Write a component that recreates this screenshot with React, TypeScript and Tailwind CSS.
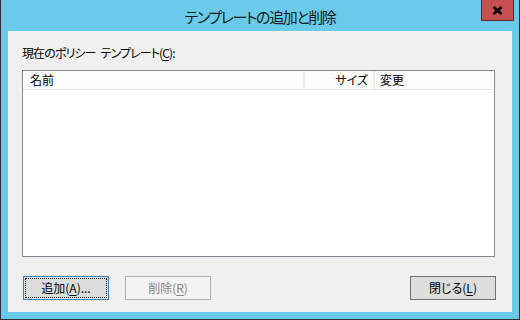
import React from "react";

const font = "font-['Meiryo_UI','Noto_Sans_CJK_JP','Noto_Sans',sans-serif] [font-feature-settings:'palt']";

export default function App() {
  return (
    <div className={`w-[520px] h-[320px] bg-[#69cbe9] border-x border-b border-[#2f2f2f] flex flex-col ${font} text-[12px] text-black`}>
      {/* Title bar */}
      <div className="relative h-[31px] flex items-center justify-center shrink-0">
        <span className="text-[15px] leading-none mt-[2px] tracking-[-1.4px] text-[#1a1a1a]">テンプレートの追加と削除</span>
        <div className="absolute right-[5px] top-0 w-[33px] h-[21px] bg-[#c75050] border border-[#5e2b2b] border-t-0 flex items-center justify-center">
          <svg width="11" height="9" viewBox="0 0 11 9">
            <path d="M1.5 1 L9.5 8 M9.5 1 L1.5 8" stroke="#000" strokeWidth="2.6" strokeLinecap="butt" />
          </svg>
        </div>
      </div>
      {/* Client */}
      <div className="mx-[7px] h-[281px] bg-[#f0f0f0] flex flex-col pl-[14px] pr-[17px] pt-[14px]">
        <div className="leading-[16px] h-[25px] tracking-[-0.9px]">
          現在のポリシー<span className="inline-block w-[5px]"></span>テンプレート(<span className="underline underline-offset-2">C</span>):
        </div>
        <div className="h-[187px] border border-[#828790] bg-white flex flex-col">
          <div className="flex h-[19px] bg-[#fcfcfc] border-b border-[#e5e5e5] mr-[1px] leading-[18px]">
            <div className="w-[282px] pl-[7px] border-r-2 border-[#ebebeb]">名前</div>
            <div className="w-[70px] pr-[5px] text-right border-r-2 border-[#ebebeb]">サイズ</div>
            <div className="flex-1 pl-[5px]">変更</div>
          </div>
        </div>
        <div className="flex mt-[19px] gap-[16px] pl-[1px]">
          <div className="w-[86px] h-[24px] bg-[#dddddd] border border-[#3c7fb1] p-[1px]">
            <div className="w-full h-full border border-dotted border-black flex items-center justify-center leading-none">
              追加(<span className="underline underline-offset-2">A</span>)...
            </div>
          </div>
          <div className="w-[86px] h-[24px] bg-[#f4f4f4] border border-[#adb2b5] flex items-center justify-center text-[#838383] leading-none">
            削除(<span className="underline underline-offset-2">R</span>)
          </div>
          <div className="ml-auto mr-[-1px] w-[86px] h-[24px] bg-[#dddddd] border border-[#707070] flex items-center justify-center leading-none">
            閉じる(<span className="underline underline-offset-2">L</span>)
          </div>
        </div>
      </div>
    </div>
  );
}
